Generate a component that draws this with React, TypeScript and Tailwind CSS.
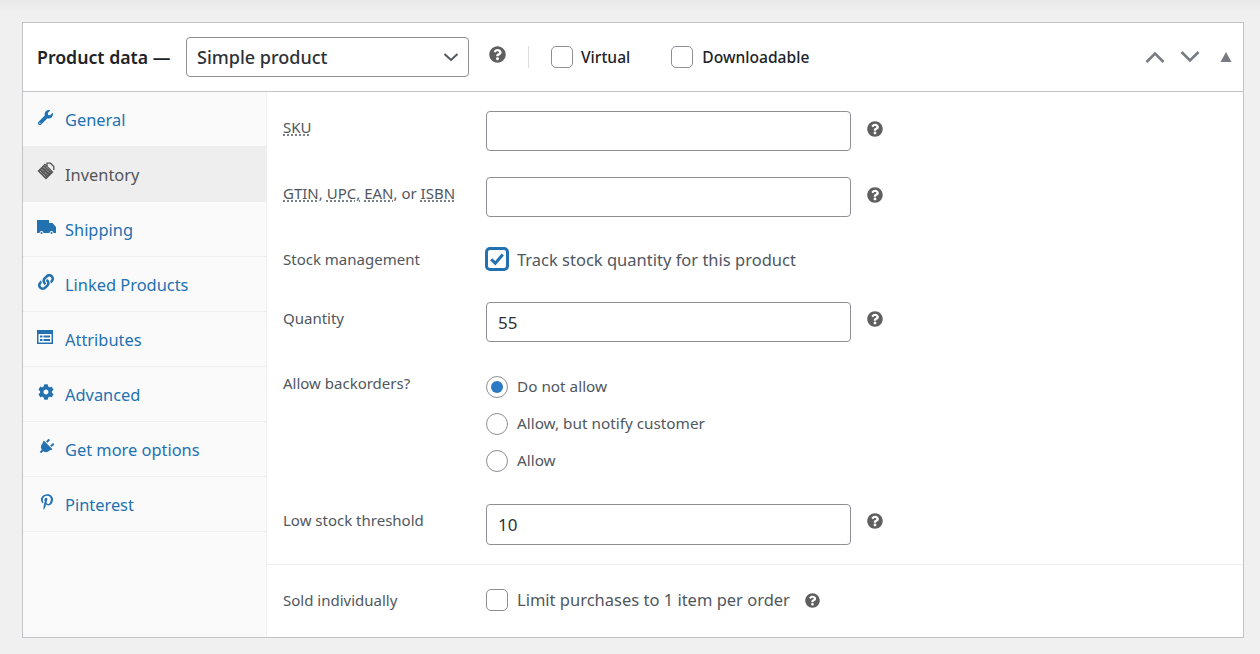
import type { ReactNode } from 'react'
import { FaCog, FaLink, FaPinterestP, FaPlug, FaQuestionCircle, FaWrench } from 'react-icons/fa'

function InventoryIcon() {
  return (
    <svg viewBox="0 0 18 18" className="w-[18px] h-[18px] -mt-[2px]" fill="none">
      <path d="M0.5 9 L8 1.5 L16.5 10 L9 17.5 Z" fill="#555" />
      <path d="M4.5 7 L10.5 13 M6.5 5 L12.5 11 M3 9 L9 15 M8 3.5 L14 9.5" stroke="#ddd" strokeWidth="0.8" strokeDasharray="1.2 0.8" />
      <path d="M10 4 V1.2 H13.5 L16.8 4.5 V8" stroke="#555" strokeWidth="1.3" />
    </svg>
  )
}

function TruckIcon() {
  return (
    <svg viewBox="0 0 19 15" className="w-[19px] h-[15px]">
      <path d="M0 0 H12 V3 H15.5 L19 7 V13 H0 Z" fill="#2271b1" />
      <circle cx="4.5" cy="13" r="2" fill="#fafafa" />
      <circle cx="4.5" cy="13" r="1" fill="#2271b1" />
      <circle cx="14.5" cy="13" r="2" fill="#fafafa" />
      <circle cx="14.5" cy="13" r="1" fill="#2271b1" />
    </svg>
  )
}

function AttributesIcon() {
  return (
    <svg viewBox="0 0 16 14" className="w-4 h-[14px]">
      <rect x="0" y="0" width="16" height="14" fill="#2271b1" />
      <rect x="1.5" y="4" width="13" height="8.5" fill="#fff" />
      <rect x="3" y="5.5" width="2.5" height="2" fill="#2271b1" />
      <rect x="3" y="9" width="2.5" height="2" fill="#2271b1" />
      <rect x="6.5" y="5.5" width="6.5" height="2" fill="#2271b1" />
      <rect x="6.5" y="9" width="6.5" height="2" fill="#2271b1" />
    </svg>
  )
}

const tabs: { label: string; icon: ReactNode; active?: boolean }[] = [
  { label: 'General', icon: <FaWrench size={15} className="ml-px" /> },
  { label: 'Inventory', icon: <InventoryIcon />, active: true },
  { label: 'Shipping', icon: <TruckIcon /> },
  { label: 'Linked Products', icon: <FaLink size={16} className="ml-px" /> },
  { label: 'Attributes', icon: <AttributesIcon /> },
  { label: 'Advanced', icon: <FaCog size={16} className="ml-px" /> },
  { label: 'Get more options', icon: <FaPlug size={16} className="rotate-45 ml-px" /> },
  { label: 'Pinterest', icon: <FaPinterestP size={16} className="ml-[2px]" /> },
]

function Help({ className = 'ml-[15px]', size = 16 }: { className?: string; size?: number }) {
  return <FaQuestionCircle size={size} className={`text-[#5f5f5f] shrink-0 ${className}`} />
}

function TextInput({ value = '', height = 'h-10' }: { value?: string; height?: string }) {
  return (
    <input
      readOnly
      value={value}
      className={`w-[365px] ${height} border border-[#8c8f94] rounded-[4px] bg-white px-[11px] text-[17px] text-[#2c3338] outline-none`}
    />
  )
}

function Checkbox({ checked = false }: { checked?: boolean }) {
  if (checked) {
    return (
      <span className="w-[24px] h-[24px] shrink-0 rounded-[5px] border-[3px] border-[#2271b1] bg-white flex items-center justify-center">
        <svg viewBox="0 0 16 16" className="w-4 h-4" fill="none">
          <path d="M2.2 8.2 L6.3 12.2 L13.8 3.5" stroke="#2271b1" strokeWidth="3" />
        </svg>
      </span>
    )
  }
  return <span className="w-[22px] h-[22px] shrink-0 rounded-[5px] border border-[#8c8f94] bg-white" />
}

function Radio({ label, checked = false }: { label: string; checked?: boolean }) {
  return (
    <div className="flex items-center h-[37px]">
      <span className="w-[22px] h-[22px] rounded-full border border-[#8c8f94] bg-white flex items-center justify-center">
        {checked && <span className="w-[12px] h-[12px] rounded-full bg-[#2a7bc4]" />}
      </span>
      <span className="ml-[9px] text-[15.3px] text-[#50575e]">{label}</span>
    </div>
  )
}

function Dotted({ children }: { children: ReactNode }) {
  return <span className="underline decoration-dotted underline-offset-2">{children}</span>
}

function Field({ label, labelClass = 'pt-[6px]', className = '', children }: { label: ReactNode; labelClass?: string; className?: string; children: ReactNode }) {
  return (
    <div className={`flex items-start ${className}`}>
      <div className={`w-[203px] shrink-0 text-[15px] leading-5 text-[#50575e] ${labelClass}`}>{label}</div>
      {children}
    </div>
  )
}

export default function App() {
  return (
    <div className="h-[654px] bg-[linear-gradient(#e8e8e8,#f0f0f1_12px)] pt-[22px] pl-[22px] overflow-hidden" style={{ fontFamily: '"Noto Sans", sans-serif' }}>
      <div className="w-[1222px] h-[616px] border border-[#c3c4c7] bg-white flex flex-col">
        <div className="h-[69px] shrink-0 border-b border-[#c3c4c7] flex items-center pl-[14px]">
          <span className="text-[17.7px] font-semibold text-[#1d2327] w-[149px] whitespace-nowrap">Product data —</span>
          <div className="relative w-[283px] h-10">
            <select className="appearance-none w-full h-full border border-[#8c8f94] rounded-[4px] bg-white pl-[10px] text-[18px] font-medium text-[#2c3338] outline-none">
              <option>Simple product</option>
            </select>
            <svg viewBox="0 0 16 16" className="absolute right-[10px] top-[12px] w-4 h-4" fill="none">
              <path d="M1.5 5 L8 11 L14.5 5" stroke="#50575e" strokeWidth="2" />
            </svg>
          </div>
          <Help className="ml-5 -mt-[6px]" size={17} />
          <span className="w-px h-[22px] bg-[#dcdcde] ml-[22px]" />
          <div className="flex items-center ml-[22px]">
            <Checkbox />
            <span className="ml-2 mt-[2px] text-[15.6px] font-medium text-[#1d2327]">Virtual</span>
          </div>
          <div className="flex items-center ml-[41px]">
            <Checkbox />
            <span className="ml-[9px] mt-[2px] text-[15.6px] font-medium text-[#1d2327]">Downloadable</span>
          </div>
          <div className="ml-auto flex items-center pr-[11px] gap-[15px]">
            <svg viewBox="0 0 20 12" className="w-5 h-3" fill="none">
              <path d="M1.5 11 L10 2.5 L18.5 11" stroke="#787c82" strokeWidth="2.6" />
            </svg>
            <svg viewBox="0 0 20 12" className="w-5 h-3" fill="none">
              <path d="M1.5 1 L10 9.5 L18.5 1" stroke="#787c82" strokeWidth="2.6" />
            </svg>
            <svg viewBox="0 0 12 10" className="w-[12px] h-[10px] ml-[5px]">
              <path d="M6 0 L11.5 10 L0.5 10 Z" fill="#787c82" />
            </svg>
          </div>
        </div>

        <div className="flex flex-1 min-h-0">
          <div className="w-[244px] shrink-0 bg-[#fafafa] border-r border-[#eee]">
            {tabs.map(tab => (
              <div
                key={tab.label}
                className={`h-[55px] flex items-center border-b border-[#eee] pl-[14px] pt-[2px] text-[16.4px] ${tab.active ? 'bg-[#eee] text-[#555]' : 'text-[#2271b1]'}`}
              >
                <span className="w-[28px] h-5 -mt-[6px] flex items-center">{tab.icon}</span>
                {tab.label}
              </div>
            ))}
          </div>

          <div className="flex-1 min-w-0">
            <div className="pl-4 pt-[19px] pb-[19px] border-b border-[#eee]">
              <Field label={<Dotted>SKU</Dotted>}>
                <TextInput />
                <Help className="ml-4 mt-[10px]" />
              </Field>
              <Field label={<><Dotted>GTIN,</Dotted> <Dotted>UPC,</Dotted> <Dotted>EAN,</Dotted> or <Dotted>ISBN</Dotted></>} className="mt-[26px]">
                <TextInput />
                <Help className="ml-4 mt-[10px]" />
              </Field>
              <Field label="Stock management" labelClass="pt-[2px]" className="mt-[30px]">
                <div className="flex items-center h-6 -ml-px">
                  <Checkbox checked />
                  <span className="ml-2 mt-[2px] text-[16.5px] text-[#50575e]">Track stock quantity for this product</span>
                </div>
              </Field>
              <Field label="Quantity" className="mt-[31px]">
                <TextInput value="55" />
                <Help className="ml-4 mt-[9px]" />
              </Field>
              <Field label="Allow backorders?" labelClass="pt-[5px]" className="mt-[26px]">
                <div>
                  <Radio label="Do not allow" checked />
                  <Radio label="Allow, but notify customer" />
                  <Radio label="Allow" />
                </div>
              </Field>
              <Field label="Low stock threshold" className="mt-[25px]">
                <TextInput value="10" height="h-[41px]" />
                <Help className="ml-4 mt-[9px]" />
              </Field>
            </div>
            <div className="pl-4 pt-[24px]">
              <Field label="Sold individually" labelClass="pt-[1px]">
                <div className="flex items-center h-[22px]">
                  <Checkbox />
                  <span className="ml-[9px] text-[16.5px] text-[#50575e]">Limit purchases to 1 item per order</span>
                  <Help className="ml-[15px]" size={15} />
                </div>
              </Field>
            </div>
          </div>
        </div>
      </div>
    </div>
  )
}
